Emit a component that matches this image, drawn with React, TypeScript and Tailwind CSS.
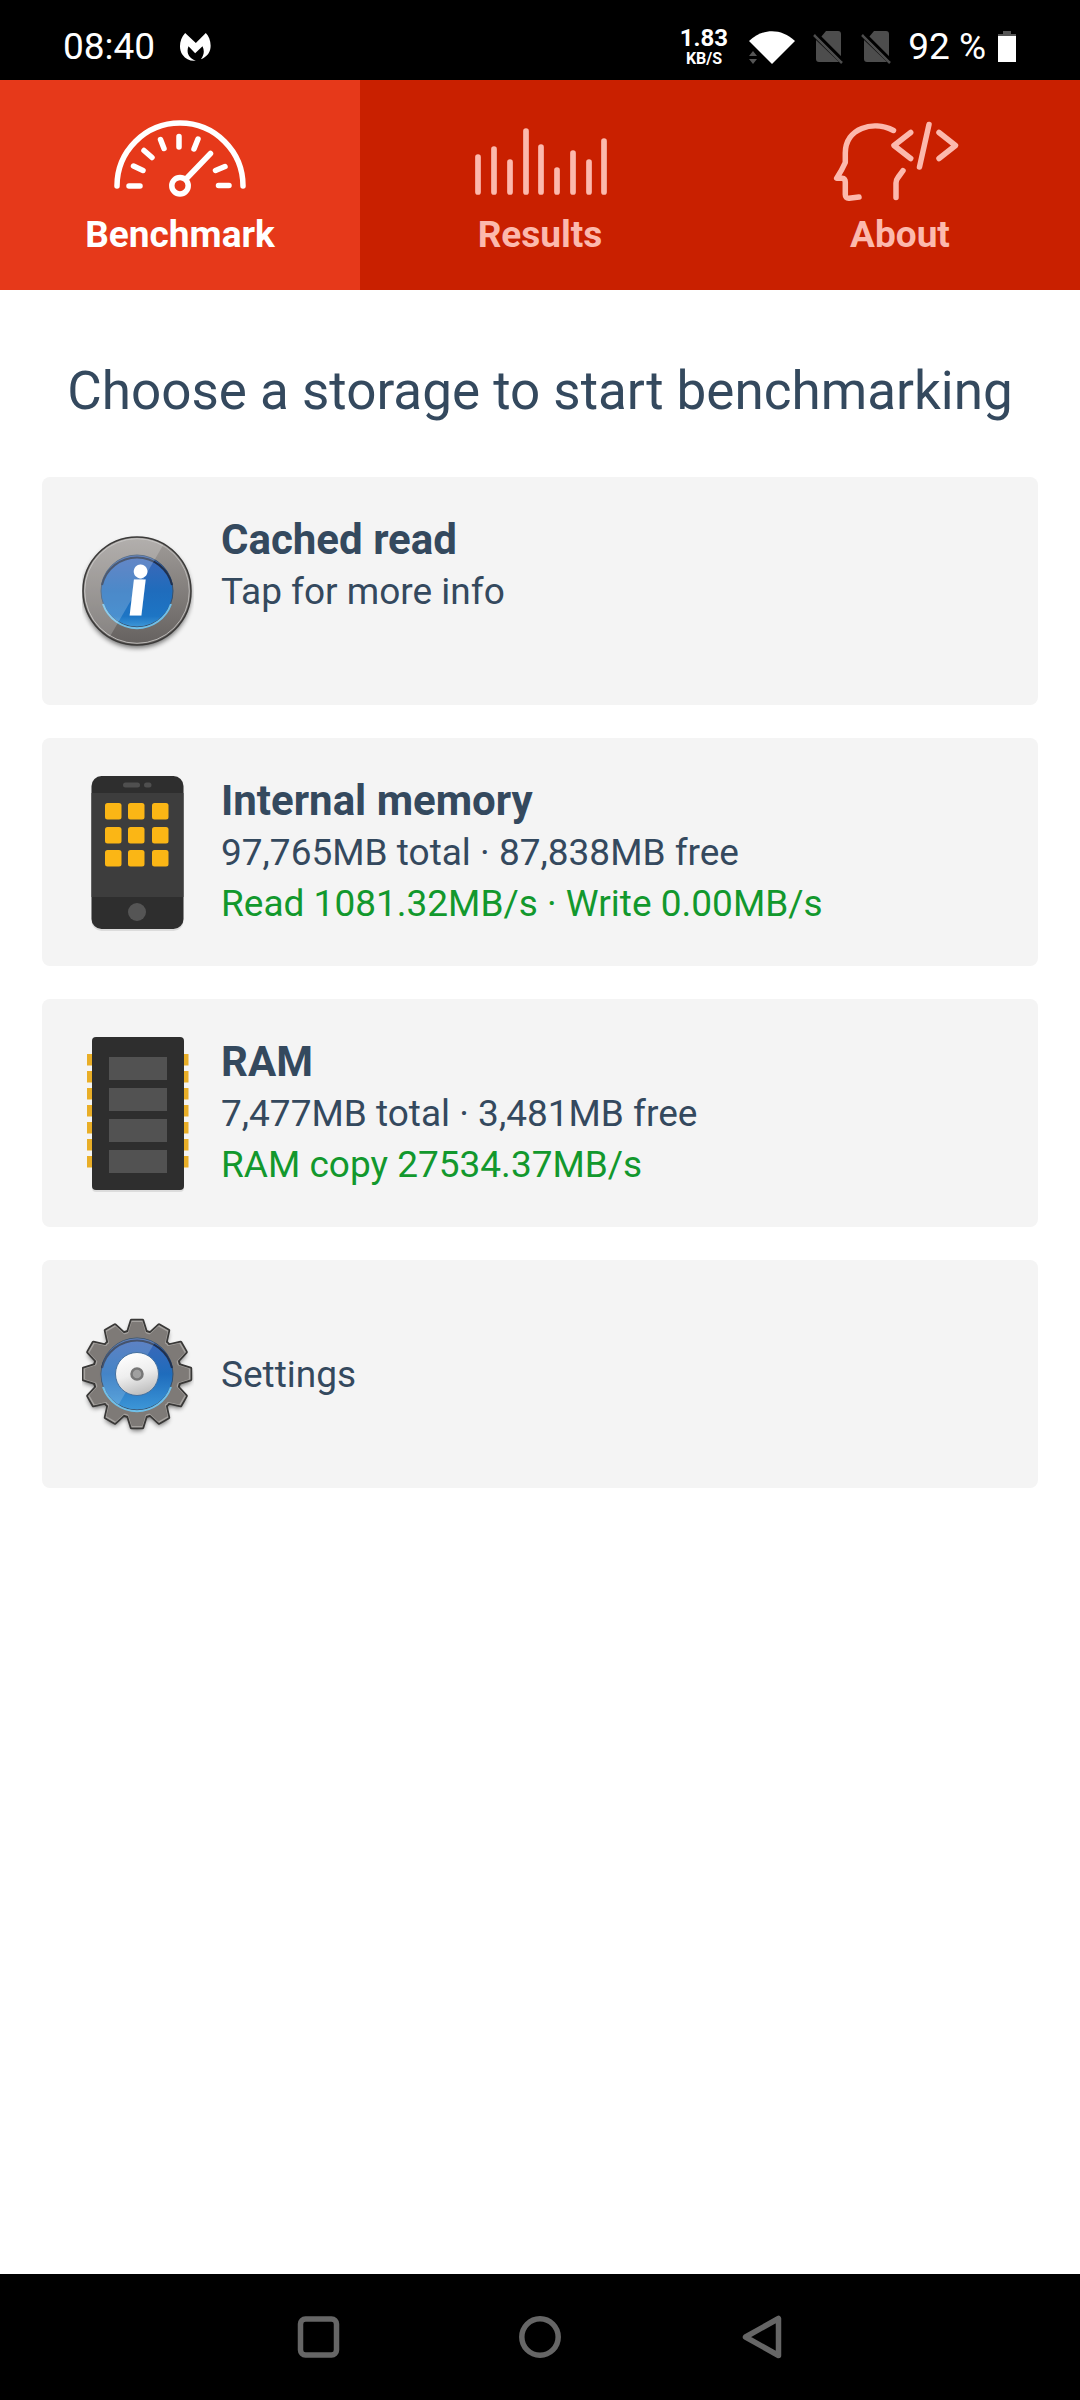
import React, { useState } from "react";

const PIN_ROWS = [21, 38, 55, 72, 89, 106, 123];
const CHIP_ROWS = [24, 55, 86, 117];
const APP_COLUMNS = [23, 46, 70];
const APP_ROWS = [31, 55, 78];
const TEETH = [0, 30, 60, 90, 120, 150, 180, 210, 240, 270, 300, 330];

// x and top of every bar in the results icon
const RESULT_BARS = [
  [10, 41],
  [26, 33],
  [42, 46],
  [58, 15],
  [73, 31],
  [89, 54],
  [105, 37],
  [121, 46],
  [136, 25],
];

const MalwareIcon = () => (
  <svg className="h-[30px] w-[33px]" viewBox="540 95 98 90" fill="currentColor" aria-hidden="true">
    <path d="M558 98C540 118 538 146 550 163C560 177 574 183 590 181C570 174 560 158 568 138L588 159L610 138C617 152 614 166 605 177C622 170 632 158 634 142C636 126 630 108 620 98L590 128Z" />
  </svg>
);

const WifiIcon = () => (
  <svg className="h-9 w-12" viewBox="0 0 48 36" aria-hidden="true">
    <path d="M1 12C15 -1 33 -1 47 12L24 35Z" fill="#fff" />
    <path d="M1 27L5 22L9 27ZM1 30H9L5 35Z" fill="#555" />
  </svg>
);

const NoSimIcon = () => (
  <svg className="h-9 w-8" viewBox="0 0 32 36" aria-hidden="true">
    <path d="M14 2H26Q29 2 29 5V28L9 8ZM4 11L27 33H7Q4 33 4 30Z" fill="#4d4d4d" />
    <path d="M2 6L30 34" stroke="#4d4d4d" strokeWidth="2.5" />
    <path d="M5 5L31 31" stroke="#000" strokeWidth="2.5" />
  </svg>
);

const BatteryIcon = () => (
  <svg className="h-8 w-[18px]" viewBox="0 0 18 32" aria-hidden="true">
    <path d="M5 0H13V3H18V5H0V3H5Z" fill="#555" />
    <path d="M0 5H18V31H0Z" fill="#fff" />
  </svg>
);

const GaugeIcon = () => (
  <svg
    className="h-[88px] w-36"
    viewBox="0 0 144 88"
    fill="none"
    stroke="currentColor"
    strokeWidth="5.5"
    strokeLinecap="round"
    aria-hidden="true"
  >
    <path d="M9 70A63 63 0 0 1 135 70" />
    <path d="M21 70H32M25.5 50L35 54.5M36 34.5L44 41.5M52.5 23.5L56 32.5M71 20.5V31M90 23L86 33M117 50.5L107.5 54.5M110.5 69.5H121" />
    <path d="M102.5 37.5L79 62" />
    <circle cx="72" cy="69.7" r="8.2" />
  </svg>
);

const ResultsIcon = () => (
  <svg
    className="h-[88px] w-36"
    viewBox="0 0 144 88"
    stroke="currentColor"
    strokeWidth="5.7"
    strokeLinecap="round"
    aria-hidden="true"
  >
    {RESULT_BARS.map(([x, top]) => (
      <line key={x} x1={x} x2={x} y1={top} y2={76} />
    ))}
  </svg>
);

const AboutIcon = () => (
  <svg
    className="h-[88px] w-36"
    viewBox="0 0 144 88"
    fill="none"
    stroke="currentColor"
    strokeWidth="5.5"
    strokeLinecap="round"
    strokeLinejoin="round"
    aria-hidden="true"
  >
    <path d="M65.5 14.5C45 4 17.5 12 17.3 37V46.5Q14 54 8.7 62.2H14Q17.3 62.5 17.3 66V78.5Q17.3 82.5 21 82.3L31 81" />
    <path d="M75 54.7L70 61.5Q68 64 68 67V81.5" />
    <path d="M82.7 16.5L66 29.5L82.7 42.5M101 8.5L91.5 51M111 16.5L127.5 29.5L111 42.5" />
  </svg>
);

const InfoIcon = () => (
  <svg className="h-40 w-28 shrink-0" viewBox="0 0 112 160" aria-hidden="true">
    <defs>
      <linearGradient id="info-ring" x1="0" y1="0" x2="0" y2="1">
        <stop offset="0" stopColor="#a09c99" />
        <stop offset="1" stopColor="#65615f" />
      </linearGradient>
      <linearGradient id="info-face" x1="0" y1="0" x2="0" y2="1">
        <stop offset="0" stopColor="#3f68b8" />
        <stop offset="0.5" stopColor="#1f6cbc" />
        <stop offset="0.85" stopColor="#1d75c4" />
        <stop offset="1" stopColor="#3d97d8" />
      </linearGradient>
      <filter id="info-shadow" x="-20%" y="-20%" width="140%" height="140%">
        <feGaussianBlur stdDeviation="2.5" />
      </filter>
      <clipPath id="info-disc">
        <circle cx="55" cy="80" r="53" />
      </clipPath>
    </defs>
    <circle cx="55" cy="83" r="54" fill="#000" opacity="0.55" filter="url(#info-shadow)" />
    <circle cx="55" cy="80" r="54" fill="url(#info-ring)" stroke="#3b3a39" strokeWidth="1.5" />
    <circle cx="55" cy="80" r="52.3" fill="none" stroke="#b9b7b5" strokeWidth="1" />
    <circle cx="55" cy="80" r="36" fill="url(#info-face)" stroke="#34506f" strokeWidth="1" />
    <path d="M20 74A36 36 0 0 1 90 74" fill="none" stroke="#20304d" strokeWidth="2" />
    <path d="M21 93A36 36 0 0 0 89 93" fill="none" stroke="#6fc0ea" strokeWidth="2" />
    <path d="M0 0H101L23 134H0Z" fill="#fff" opacity="0.2" clipPath="url(#info-disc)" />
    <text
      x="56"
      y="103"
      textAnchor="middle"
      fill="#fff"
      stroke="#fff"
      strokeWidth="3"
      className="font-[Lato,sans-serif] text-[64px] font-black italic"
    >
      i
    </text>
  </svg>
);

const PhoneIcon = () => (
  <svg className="h-40 w-28 shrink-0" viewBox="0 0 112 160" aria-hidden="true">
    <rect x="9.5" y="6" width="92" height="153" rx="10" fill="#dcdcdc" />
    <rect x="9.5" y="4" width="92" height="153" rx="10" fill="#2e2e2e" />
    <rect x="9.5" y="21" width="92" height="104" fill="#3d3d3d" />
    <rect x="41" y="10.5" width="17" height="5" rx="2.5" fill="#4f4f4f" />
    <rect x="62" y="10.5" width="7.5" height="5" rx="2.5" fill="#4f4f4f" />
    {APP_ROWS.map((y) =>
      APP_COLUMNS.map((x) => (
        <rect key={`${x}-${y}`} x={x} y={y} width="16.5" height="16.5" rx="2.5" fill="#fbb615" />
      ))
    )}
    <circle cx="55" cy="140" r="9" fill="#555" />
  </svg>
);

const RamIcon = () => (
  <svg className="h-40 w-28 shrink-0" viewBox="0 0 112 160" aria-hidden="true">
    {PIN_ROWS.map((y) => (
      <rect key={y} x="5" y={y} width="101.5" height="11.5" fill="#e9ae27" />
    ))}
    <rect x="10" y="6" width="92" height="153" rx="4" fill="#dcdcdc" />
    <rect x="10" y="4" width="92" height="153" rx="4" fill="#2e2e2e" />
    {CHIP_ROWS.map((y) => (
      <rect key={y} x="27" y={y} width="58" height="23" fill="#525252" />
    ))}
  </svg>
);

const GearShape = () => (
  <>
    <circle cx="55" cy="80" r="43" />
    {TEETH.map((angle) => (
      <path key={angle} d="M45 41L49.5 26.5H60.5L65 41Z" transform={`rotate(${angle} 55 80)`} />
    ))}
  </>
);

const GearIcon = () => (
  <svg className="h-40 w-28 shrink-0" viewBox="0 0 112 160" aria-hidden="true">
    <defs>
      <linearGradient id="gear-face" x1="0" y1="0" x2="0" y2="1">
        <stop offset="0" stopColor="#3f68b8" />
        <stop offset="0.5" stopColor="#1f6cbc" />
        <stop offset="1" stopColor="#3d97d8" />
      </linearGradient>
      <linearGradient id="gear-hub" x1="0.3" y1="0" x2="0.6" y2="1">
        <stop offset="0" stopColor="#fff" />
        <stop offset="0.5" stopColor="#eee" />
        <stop offset="1" stopColor="#bcbcbc" />
      </linearGradient>
      <filter id="gear-shadow" x="-20%" y="-20%" width="140%" height="140%">
        <feGaussianBlur stdDeviation="2.5" />
      </filter>
      <clipPath id="gear-disc">
        <circle cx="55" cy="80" r="36" />
      </clipPath>
    </defs>
    <g transform="translate(0 3)" opacity="0.6" filter="url(#gear-shadow)">
      <GearShape />
    </g>
    <g fill="#393837" stroke="#393837" strokeWidth="3.5" strokeLinejoin="round">
      <GearShape />
    </g>
    <g fill="#a5a29f">
      <GearShape />
    </g>
    <g fill="#7e7a77" transform="translate(55 80) scale(0.97) translate(-55 -80)">
      <GearShape />
    </g>
    <circle cx="55" cy="80" r="36" fill="url(#gear-face)" stroke="#34506f" strokeWidth="1" />
    <path d="M20 74A36 36 0 0 1 90 74" fill="none" stroke="#20304d" strokeWidth="2" />
    <path d="M21 93A36 36 0 0 0 89 93" fill="none" stroke="#6fc0ea" strokeWidth="2" />
    <path d="M0 0H101L23 134H0Z" fill="#fff" opacity="0.17" clipPath="url(#gear-disc)" />
    <circle cx="55" cy="80" r="21.5" fill="url(#gear-hub)" stroke="#44709f" strokeWidth="1" />
    <circle cx="55" cy="80" r="5.5" fill="#a0a0a0" stroke="#777" strokeWidth="2.5" />
  </svg>
);

interface StorageCardProps {
  icon: React.ReactNode;
  title: string;
  info: string;
  result?: string;
}

const StorageCard: React.FC<StorageCardProps> = ({ icon, title, info, result }) => (
  <button
    type="button"
    className="flex min-h-[228px] w-full items-center gap-[27px] rounded-lg bg-[#f4f4f4] pl-10 pr-6 text-left"
  >
    {icon}
    <span className="flex min-h-[154px] flex-col text-[37px] leading-[51px]">
      <span className="text-[42px] font-bold leading-[52px]">{title}</span>
      <span>{info}</span>
      {result && <span className="text-[#12982d]">{result}</span>}
    </span>
  </button>
);

const TABS = [
  { label: "Benchmark", icon: <GaugeIcon /> },
  { label: "Results", icon: <ResultsIcon /> },
  { label: "About", icon: <AboutIcon /> },
];

export default function App() {
  const [activeTab, setActiveTab] = useState("Benchmark");

  return (
    <div className="flex min-h-screen flex-col bg-white font-[Roboto,sans-serif] text-[#34495e]">
      {/* Status bar */}
      <header className="flex h-20 items-center justify-between bg-black pl-[63px] pr-16 pt-[14px] text-[37px] leading-[44px] text-white">
        <div className="flex items-center gap-6">
          <time>08:40</time>
          <MalwareIcon />
        </div>
        <div className="flex items-center gap-4">
          <div className="mr-1 flex flex-col items-center font-bold">
            <span className="text-[24px] leading-[24px]">1.83</span>
            <span className="text-[16px] leading-[18px]">KB/S</span>
          </div>
          <WifiIcon />
          <NoSimIcon />
          <NoSimIcon />
          <div className="flex items-center gap-3">
            <span>92 %</span>
            <BatteryIcon />
          </div>
        </div>
      </header>

      {/* Tabs */}
      <nav className="grid grid-cols-3 bg-[#c92000]">
        {TABS.map(({ label, icon }) => (
          <button
            key={label}
            type="button"
            onClick={() => setActiveTab(label)}
            className={`flex h-[210px] flex-col items-center gap-[9px] pt-9 text-[37px] font-bold leading-[44px] ${
              activeTab === label ? "bg-[#e6391a] text-white" : "text-[#fcb9ad]"
            }`}
          >
            {icon}
            {label}
          </button>
        ))}
      </nav>

      <main className="flex-1 px-[42px]">
        <h1 className="pb-[54px] pt-[69px] text-center text-[53px] leading-[64px]">
          Choose a storage to start benchmarking
        </h1>
        <div className="flex flex-col gap-[33px]">
          <StorageCard icon={<InfoIcon />} title="Cached read" info="Tap for more info" />
          <StorageCard
            icon={<PhoneIcon />}
            title="Internal memory"
            info="97,765MB total · 87,838MB free"
            result="Read 1081.32MB/s · Write 0.00MB/s"
          />
          <StorageCard
            icon={<RamIcon />}
            title="RAM"
            info="7,477MB total · 3,481MB free"
            result="RAM copy 27534.37MB/s"
          />
          <button
            type="button"
            className="flex min-h-[228px] w-full items-center gap-[27px] rounded-lg bg-[#f4f4f4] pl-10 pr-6 text-left text-[37px] leading-[51px]"
          >
            <GearIcon />
            Settings
          </button>
        </div>
      </main>

      {/* System navigation */}
      <footer className="flex h-[126px] items-center justify-center gap-[173px] bg-black text-[#666]">
        <button type="button" aria-label="Recent apps">
          <svg className="size-12" viewBox="0 0 48 48" fill="none" stroke="currentColor" strokeWidth="5.5">
            <rect x="5.5" y="6" width="36" height="36" rx="5" />
          </svg>
        </button>
        <button type="button" aria-label="Home">
          <svg className="size-12" viewBox="0 0 48 48" fill="none" stroke="currentColor" strokeWidth="5.5">
            <circle cx="24" cy="24" r="18.2" />
          </svg>
        </button>
        <button type="button" aria-label="Back">
          <svg
            className="size-12"
            viewBox="0 0 48 48"
            fill="none"
            stroke="currentColor"
            strokeWidth="5.5"
            strokeLinejoin="round"
          >
            <path d="M8.5 24L41.5 5.5V42.5Z" />
          </svg>
        </button>
      </footer>
    </div>
  );
}
